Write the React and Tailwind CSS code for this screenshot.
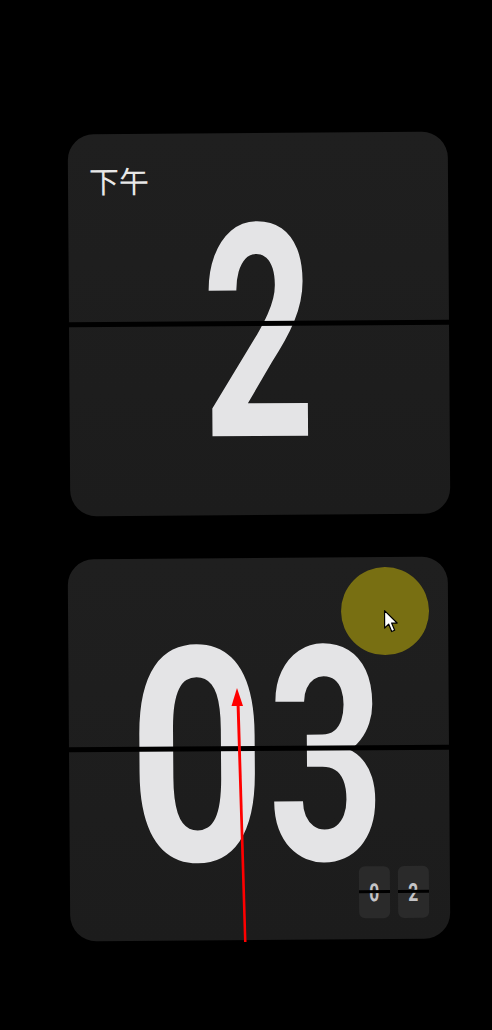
import React from "react";

const digitFont = { fontFamily: 'Roboto, "Liberation Sans", Arial, sans-serif' };

function MiniTile({ d }) {
  return (
    <div className="relative w-[31px] h-[52px] rounded-[6px] bg-[#2a2a2a] flex items-center justify-center overflow-hidden">
      <span
        className="text-[25px] leading-[20px] font-bold text-[#c4c4c6] scale-x-[0.7] translate-y-[1px]"
        style={digitFont}
      >
        {d}
      </span>
      <div className="absolute left-0 right-0 top-[24px] h-[3px] bg-black" />
    </div>
  );
}

function Card({ children, overlay }) {
  return (
    <div className="relative w-[380px] h-[382px] rounded-[26px] bg-gradient-to-b from-[#1f1f1f] to-[#1c1c1c] overflow-hidden flex items-center justify-center rotate-[-0.4deg]">
      {children}
      <div className="absolute left-0 right-0 top-[188px] h-[5px] bg-black" />
      {overlay}
    </div>
  );
}

export default function App() {
  return (
    <div className="relative w-[492px] h-[1030px] bg-black overflow-hidden">
      <div className="flex flex-col gap-[43px] pt-[133px] pl-[69px]">
        <Card
          overlay={
            <div
              className="absolute left-[21px] top-[26px] text-[30px] leading-[40px] text-[#e8e8e8]"
              style={{ fontFamily: '"Noto Sans CJK SC", "Noto Sans", sans-serif' }}
            >
              下午
            </div>
          }
        >
          <span
            className="block text-[298px] leading-[200px] font-bold text-[#e4e4e6] scale-x-[0.66] translate-y-[11px] -translate-x-[1px]"
            style={digitFont}
          >
            2
          </span>
        </Card>

        <Card
          overlay={
            <>
              <div className="absolute left-[273px] top-[10px] w-[88px] h-[88px] rounded-full bg-[#786f12] flex items-center justify-center">
                <svg width="18" height="26" viewBox="0 0 18 26" className="ml-[14px] mt-[22px]">
                  <path
                    d="M1.5 1.5 L1.5 19 L5.5 15 L8.5 22.5 L11.5 21.2 L8.5 14 L14 14 Z"
                    fill="#fff"
                    stroke="#000"
                    strokeWidth="1.2"
                    strokeLinejoin="round"
                  />
                </svg>
              </div>
              <div className="absolute right-[21px] bottom-[21px] flex gap-[8px]">
                <MiniTile d="0" />
                <MiniTile d="2" />
              </div>
            </>
          }
        >
          <div className="flex mr-[7px] translate-y-[9px]">
            <div className="w-[142px] min-w-0 shrink-0 flex justify-center">
              <span
                className="block text-[300px] leading-[200px] font-bold text-[#e4e4e6] scale-x-[0.8] translate-x-[13px]"
                style={digitFont}
              >
                0
              </span>
            </div>
            <div className="w-[142px] min-w-0 shrink-0 flex justify-center">
              <span
                className="block text-[300px] leading-[200px] font-bold text-[#e4e4e6] scale-x-[0.68]"
                style={digitFont}
              >
                3
              </span>
            </div>
          </div>
        </Card>
      </div>

      <svg
        className="absolute left-0 top-0 pointer-events-none"
        width="492"
        height="1030"
        viewBox="0 0 492 1030"
      >
        <path d="M236.5 702 L244 942 L246.5 942 L239.5 702 Z" fill="#ff0000" />
        <path d="M237 688 L231.5 706 L243 706 Z" fill="#ff0000" />
      </svg>
    </div>
  );
}
